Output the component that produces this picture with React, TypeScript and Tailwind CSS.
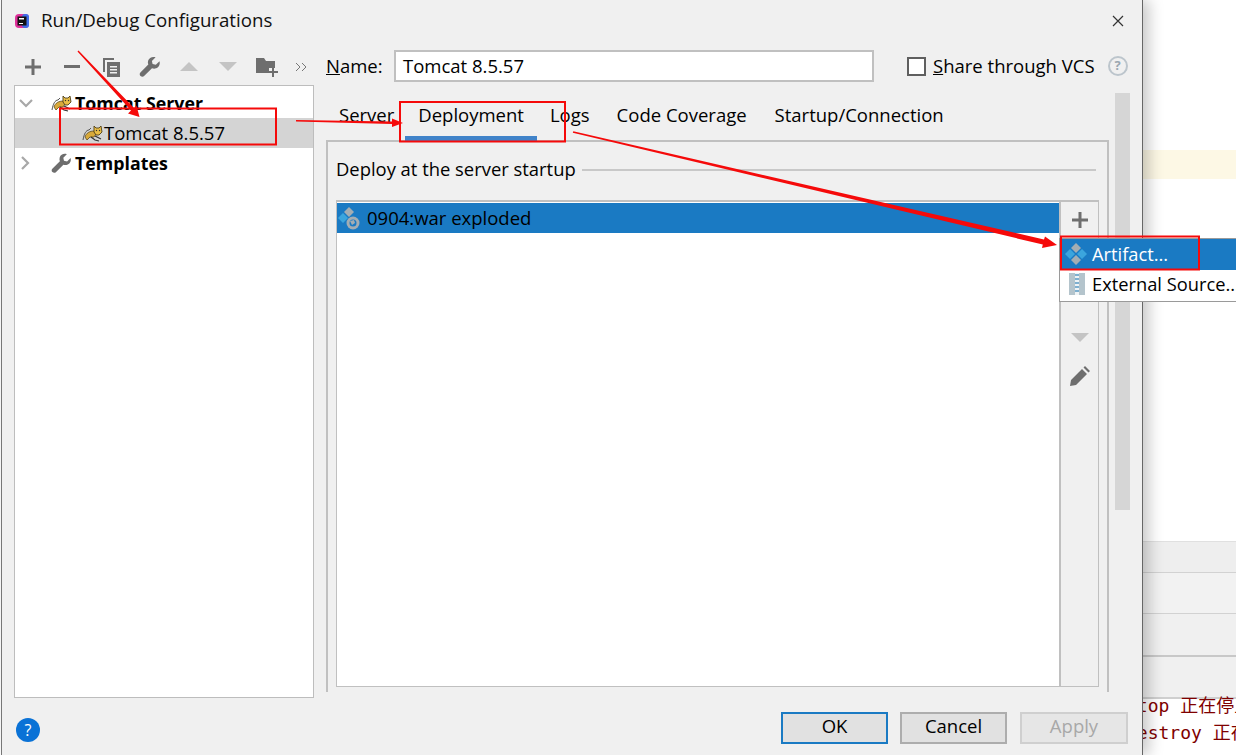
const uiFont = "[font-family:'Open_Sans','Noto_Sans',sans-serif]";

function TomcatIcon({ className }: { className: string }) {
  return (
    <svg viewBox="0 0 21 17" className={className}>
      <path d="M1 15 C2 9 4 5 7 5 L9 3" fill="none" stroke="#555" strokeWidth="1" />
      <path d="M3 12 C4 8 8 6 12 6 L14 9 L12 12 L8 12 L5 15 Z" fill="#d8a93a" stroke="#5b4a20" strokeWidth="0.8" />
      <path d="M12 1 L14 3 L17 3 L19 1 L20 7 L17 10 L14 10 L12 7 Z" fill="#e9bd45" stroke="#4e3f1a" strokeWidth="0.9" />
      <path d="M9 12 L13 15 L17 16 M13 11 L19 14" fill="none" stroke="#333" strokeWidth="1.2" />
      <circle cx="14.5" cy="5.5" r="0.7" fill="#333" />
      <circle cx="17.5" cy="5.5" r="0.7" fill="#333" />
    </svg>
  );
}

function WrenchIcon({ className }: { className: string }) {
  return (
    <svg viewBox="0 0 22 22" className={className}>
      <path
        d="M20.5 5.2 L16.8 8.8 L13.6 8 L12.9 4.9 L16.6 1.2 C13.4 0.2 10 1.6 9.1 4.7 C8.7 6.1 8.8 7.4 9.3 8.6 L1.4 16.4 C0.4 17.4 0.5 19 1.5 20 C2.5 21 4.1 21.1 5.1 20.1 L13 12.2 C14.3 12.7 15.6 12.8 17 12.3 C20 11.3 21.4 8.2 20.5 5.2 Z"
        fill="#6e6e6e"
      />
    </svg>
  );
}

function ArtifactIcon({ globe }: { globe?: boolean }) {
  return (
    <svg viewBox="0 0 24 24" className="h-[24px] w-[24px] shrink-0">
      <path d="M12 1 L17 6 L12 11 L7 6 Z" fill="#a3adb3" />
      <path d="M6 7 L11 12 L6 17 L1 12 Z" fill="#3ba5dd" />
      {globe ? (
        <>
          <circle cx="16" cy="17" r="6.5" fill="#a3adb3" />
          <circle cx="16" cy="17" r="3.5" fill="#1a7ac3" />
          <path d="M13 15 L17 14 L18 17 L15 19 Z" fill="#a3adb3" />
        </>
      ) : (
        <>
          <path d="M18 7 L23 12 L18 17 L13 12 Z" fill="#3ba5dd" />
          <path d="M12 13 L17 18 L12 23 L7 18 Z" fill="#a3adb3" />
        </>
      )}
    </svg>
  );
}

function ToolbarIcons() {
  return (
    <div className="-ml-px flex h-[45px] items-center pt-[8px]">
      <div className="flex w-[39px] justify-center">
        <svg viewBox="0 0 16 16" className="h-[16px] w-[16px]"><path d="M6.5 0h3v6.5H16v3H9.5V16h-3V9.5H0v-3h6.5z" fill="#6e6e6e" /></svg>
      </div>
      <div className="flex w-[39px] justify-center">
        <div className="h-[3px] w-[16px] bg-[#6e6e6e]" />
      </div>
      <div className="flex w-[39px] justify-center">
        <svg viewBox="0 0 18 20" className="h-[20px] w-[18px]">
          <path d="M1 1h11v2H3v12H1z" fill="#6e6e6e" />
          <path d="M5 5h13v15H5z" fill="#6e6e6e" />
          <path d="M8 9h7v1.5H8zM8 12h7v1.5H8zM8 15h7v1.5H8z" fill="#f0f0f0" />
        </svg>
      </div>
      <div className="flex w-[39px] justify-center">
        <WrenchIcon className="h-[22px] w-[22px]" />
      </div>
      <div className="flex w-[39px] justify-center">
        <div className="h-0 w-0 border-x-[9px] border-b-[9px] border-x-transparent border-b-[#c4c4c4]" />
      </div>
      <div className="flex w-[39px] justify-center">
        <div className="h-0 w-0 border-x-[9px] border-t-[9px] border-x-transparent border-t-[#c4c4c4]" />
      </div>
      <div className="flex w-[39px] justify-center">
        <svg viewBox="0 0 22 20" className="h-[20px] w-[22px]">
          <path d="M0 1h8l2 3h9v7h-6v5H0z" fill="#6e6e6e" />
          <path d="M16 11h2v3h4v2h-4v4h-2v-4h-3v-2h3z" fill="#6e6e6e" />
        </svg>
      </div>
      <svg viewBox="0 0 12 10" className="ml-[9px] h-[10px] w-[12px]">
        <path d="M1 1l4 4-4 4M7 1l4 4-4 4" fill="none" stroke="#777" strokeWidth="1" />
      </svg>
    </div>
  );
}

function ConfigTree() {
  return (
    <div className="flex-1 border border-[#bdbdbd] bg-white pt-[2px] text-black">
      <div className="flex h-[30px] items-center">
        <svg viewBox="0 0 14 9" className="ml-[4px] h-[9px] w-[14px]"><path d="M1 1l6 6 6-6" fill="none" stroke="#a8a8a8" strokeWidth="2.2" /></svg>
        <TomcatIcon className="ml-[18px] h-[17px] w-[21px]" />
        <span className="ml-[3px] text-[17.8px] font-bold">Tomcat Server</span>
      </div>
      <div className="flex h-[30px] items-center bg-[#d4d4d4]">
        <TomcatIcon className="ml-[67px] h-[17px] w-[21px]" />
        <span className="ml-px text-[18.5px]">Tomcat 8.5.57</span>
      </div>
      <div className="flex h-[30px] items-center">
        <svg viewBox="0 0 9 14" className="ml-[6px] h-[14px] w-[9px]"><path d="M1 1l6 6-6 6" fill="none" stroke="#a8a8a8" strokeWidth="2.2" /></svg>
        <WrenchIcon className="ml-[21px] h-[21px] w-[21px]" />
        <span className="ml-[3px] text-[17.8px] font-bold">Templates</span>
      </div>
    </div>
  );
}

function DeploymentPanel() {
  return (
    <div className="flex h-[552px] flex-col border-x-2 border-t-2 border-[#c0c0c0] px-[8px]">
      <div className="flex h-[58px] items-center pb-[5px]">
        <span className="mr-[6px] text-[18.4px]">Deploy at the server startup</span>
        <div className="mr-[3px] mt-[3px] h-[2px] flex-1 bg-[#c8c8c8]" />
      </div>
      <div className="flex h-[487px] border border-t-2 border-[#c0c0c0] bg-white">
        <div className="flex-1 pt-px">
          <div className="flex h-[30px] items-center bg-[#1a7ac3] text-[18.5px] text-black">
            <ArtifactIcon globe />
            <span className="ml-[6px]">0904:war exploded</span>
          </div>
        </div>
        <div className="flex w-[39px] flex-col items-center border-l-2 border-[#c0c0c0] bg-[#f0f0f0] pt-[10px]">
          <svg viewBox="0 0 16 16" className="h-[16px] w-[16px]"><path d="M6.5 0h3v6.5H16v3H9.5V16h-3V9.5H0v-3h6.5z" fill="#6e6e6e" /></svg>
          <div className="mt-[105px] h-0 w-0 border-x-[9px] border-t-[9px] border-x-transparent border-t-[#c4c4c4]" />
          <svg viewBox="0 0 20 20" className="mt-[24px] h-[20px] w-[20px]">
            <path d="M0 20 L1 14 L12 3 L17 8 L6 19 Z M13.5 1.5 L15 0 L20 5 L18.5 6.5 Z" fill="#6e6e6e" />
          </svg>
        </div>
      </div>
    </div>
  );
}

function RightColumn() {
  return (
    <div className="ml-[12px] flex w-[804px] flex-col pt-[10px] text-[18.5px] text-black">
      <div className="flex h-[32px] items-center">
        <span className="w-[68px]"><span className="underline">N</span>ame:</span>
        <div className="flex h-[32px] w-[480px] items-center border-2 border-[#c0c0c0] bg-white pl-[7px]">Tomcat 8.5.57</div>
        <div className="ml-[33px] h-[19px] w-[19px] border-2 border-[#5f5f5f] bg-white" />
        <span className="ml-[7px]"><span className="underline">S</span>hare through VCS</span>
        <div className="ml-[13px] flex h-[20px] w-[20px] items-center justify-center rounded-full border-2 border-[#bcc5cc] text-[13px] font-bold text-[#9aa7b0]">?</div>
      </div>
      <div className="mt-[11px] flex">
        <div className="w-[783px] pt-[7px]">
          <div className="flex h-[40px] pt-px">
            <div className="pl-[13px] pr-[11px]">Server</div>
            <div className="relative px-[13px]">
              Deployment
              <div className="absolute inset-x-0 bottom-[-1px] h-[5px] bg-[#4083c9]" />
            </div>
            <div className="px-[13px]">Logs</div>
            <div className="pl-[14px] pr-[13px]">Code Coverage</div>
            <div className="pl-[15px] pr-[13px]">Startup/Connection</div>
          </div>
          <DeploymentPanel />
        </div>
        <div className="ml-[6px] h-[417px] w-[15px] bg-[#d6d6d6]" />
      </div>
    </div>
  );
}

function DialogFooter() {
  return (
    <div className="flex h-[57px] items-start pt-[14px] text-[18.5px]">
      <div className="ml-[2px] mt-[6px] flex h-[24px] w-[24px] items-center justify-center rounded-full bg-[#0a72d6] text-[16px] text-white">?</div>
      <div className="ml-auto flex h-[32px] w-[107px] items-center justify-center border-2 border-[#1a7ac3] bg-[#e1e1e1] pb-[5px] text-black">OK</div>
      <div className="ml-[12px] flex h-[32px] w-[107px] items-center justify-center border-2 border-[#adadad] bg-[#e1e1e1] pb-[5px] text-black">Cancel</div>
      <div className="ml-[13px] mr-[14px] flex h-[32px] w-[108px] items-center justify-center border-2 border-[#cfcfcf] bg-[#e6e6e6] pb-[5px] text-[#a8a8a8]">Apply</div>
    </div>
  );
}

function BackgroundEditor() {
  return (
    <div className="flex h-full flex-1 flex-col overflow-hidden bg-white font-['DejaVu_Sans_Mono','Noto_Sans_CJK_SC',monospace] text-[18px] text-[#7f0000]">
      <div className="h-[150px]" />
      <div className="h-[29px] bg-[#fdf8e5]" />
      <div className="h-[362px]" />
      <div className="h-[31px] border-t border-[#e0e0e0] bg-[#eeeeee]" />
      <div className="h-[41px] border-t border-[#d2d2d2] bg-[#f2f2f2]" />
      <div className="h-[42px] border-t border-[#d2d2d2] bg-[#f0f0f0]" />
      <div className="h-[42px] border-t-2 border-[#c8c8c8] bg-[#f0f0f0]" />
      <div className="flex-1 border-t-2 border-[#cfcfcf]">
        <div className="ml-[-17px] h-[20px] whitespace-nowrap leading-[14px]">stop 正在停止</div>
        <div className="ml-[-17px] whitespace-nowrap leading-[28px]">destroy 正在销毁</div>
      </div>
    </div>
  );
}

function Annotations() {
  return (
    <svg viewBox="0 0 1236 755" className="pointer-events-none absolute left-0 top-0 z-20 h-[755px] w-[1236px]">
      <path d="M77.5 51.5 L78.5 50.5 L134 108 L136.5 105.5 L139.5 117 L128 113.5 L131 110.5 Z" fill="#f50a0a" />
      <path d="M296 120 L392 121.5 L392 118.5 L403 123 L392 127 L392 124 L296 121.5 Z" fill="#f50a0a" />
      <path d="M573.3 131.3 L1044 239.5 L1045 236.5 L1057 245 L1042 248 L1042.8 244.5 L572.8 132.8 Z" fill="#f50a0a" />
      <g fill="none" stroke="#f50a0a" strokeWidth="2">
        <rect x="60" y="108.5" width="216" height="36" />
        <rect x="400" y="102" width="165" height="39.5" />
        <rect x="1061" y="236.5" width="138" height="33" />
      </g>
    </svg>
  );
}

function AddMenu() {
  return (
    <div className="absolute left-[1059px] top-[238px] z-10 h-[64px] w-[177px] border-y border-l border-[#9a9a9a] bg-white text-[18.3px]">
      <div className="flex h-[31px] items-center bg-[#1a7ac3] pb-[2px] pl-[4px] text-white">
        <ArtifactIcon />
        <span className="ml-[4px]">Artifact...</span>
      </div>
      <div className="flex h-[29px] items-center pb-[2px] text-black">
        <svg viewBox="0 0 16 22" className="ml-[9px] h-[22px] w-[16px] shrink-0">
          <rect width="16" height="22" fill="#b4c4cc" />
          <rect x="6" width="4" height="22" fill="#eef3f5" />
          <path d="M6 2h4M6 6h4M6 10h4M6 14h4M6 18h4" stroke="#5a9bc4" strokeWidth="1.5" />
        </svg>
        <span className="ml-[7px] whitespace-nowrap">External Source...</span>
      </div>
    </div>
  );
}

export default function App() {
  return (
    <div className={`relative flex h-[755px] w-[1236px] overflow-hidden bg-white pl-px ${uiFont}`}>
      <div className="relative z-[5] flex h-full w-[1142px] flex-col border-x border-l-[#777777] border-r-[#666666] bg-[#f0f0f0] pl-[12px] shadow-[6px_0_14px_rgba(0,0,0,0.22)]">
        <div className="flex h-[40px] items-center pt-px">
          <svg viewBox="0 0 16 16" className="h-[16px] w-[16px]">
            <rect x="1" y="1" width="14" height="14" rx="4" fill="#e0329b" />
            <rect x="8" y="1" width="7" height="14" rx="3" fill="#3f6ee8" />
            <rect x="3.5" y="3.5" width="9" height="9" fill="#111" />
            <path d="M5 5h5v1.5H5zM5 10h4v1H5z" fill="#fff" />
          </svg>
          <span className="ml-[11px] text-[18.7px] text-[#111]">Run/Debug Configurations</span>
          <svg viewBox="0 0 12 12" className="ml-auto mr-[18px] h-[12px] w-[12px]">
            <path d="M1 1l10 10M11 1L1 11" stroke="#333" strokeWidth="1.2" />
          </svg>
        </div>
        <div className="flex h-[658px]">
          <div className="flex w-[300px] flex-col">
            <ToolbarIcons />
            <ConfigTree />
          </div>
          <RightColumn />
        </div>
        <DialogFooter />
      </div>
      <BackgroundEditor />
      <AddMenu />
      <Annotations />
    </div>
  );
}
